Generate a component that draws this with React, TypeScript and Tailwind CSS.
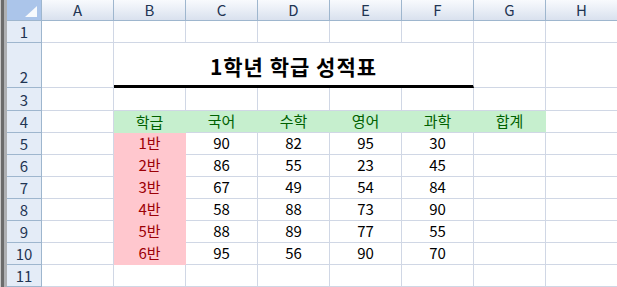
import React from 'react';

const columns = ['A', 'B', 'C', 'D', 'E', 'F', 'G', 'H'];
const subjects = ['국어', '수학', '영어', '과학'];

const scores = [
  { name: '1반', values: [90, 82, 95, 30] },
  { name: '2반', values: [86, 55, 23, 45] },
  { name: '3반', values: [67, 49, 54, 84] },
  { name: '4반', values: [58, 88, 73, 90] },
  { name: '5반', values: [88, 89, 77, 55] },
  { name: '6반', values: [95, 56, 90, 70] },
];

const cellBase = 'flex items-end justify-center leading-[18px] text-[15px]';
const grid = 'border-r border-b border-[#d0d7e5]';

const RowHeader: React.FC<{ n: number }> = ({ n }) => (
  <div className="flex items-end justify-center border-r border-b border-[#9eb6ce] bg-[#e4ecf7] text-[15px] leading-[18px] pb-[1px] text-[#1f3553]">
    {n}
  </div>
);

const Cell: React.FC<{ className?: string; children?: React.ReactNode }> = ({
  className = '',
  children,
}) => <div className={`${cellBase} ${className}`}>{children}</div>;

export default function App() {
  return (
    <div className="w-[617px] h-[287px] overflow-hidden bg-white font-['Noto_Sans_CJK_KR','Liberation_Sans',sans-serif] text-black">
      <div className="grid grid-cols-[7px_35px_repeat(8,72px)] grid-rows-[21px_22px_45px_23px_22px_repeat(7,22px)]">
        {/* Left window edge */}
        <div className="row-span-12 flex">
          <div className="w-px bg-[#c8c8c8]" />
          <div className="w-[3px] bg-[#6b6b6b]" />
          <div className="w-[3px] bg-[#aeb0b3]" />
        </div>

        {/* Corner */}
        <div className="flex items-end justify-end border-r border-b border-[#9eb6ce] bg-[#abc5ea] pr-[4px] pb-[3px]">
          <svg width="12" height="11" viewBox="0 0 12 11">
            <polygon points="12,0 12,11 0,11" fill="#ffffff" opacity="0.9" />
          </svg>
        </div>

        {/* Column headers */}
        {columns.map((c) => (
          <div
            key={c}
            className="flex items-center justify-center border-r border-b border-[#9eb6ce] bg-linear-to-b from-[#f8fafd] via-[#e9eef6] to-[#d9e1ee] text-[15px] text-[#1f3553]"
          >
            {c}
          </div>
        ))}

        {/* Row 1 */}
        <RowHeader n={1} />
        {columns.map((c) => (
          <div key={c} className={grid} />
        ))}

        {/* Row 2: title */}
        <RowHeader n={2} />
        <div className={grid} />
        <div className="col-span-5 flex items-end justify-center border-r border-[#d0d7e5] border-b-[3px] border-b-black pb-[7px]">
          <span className="text-[21px] font-bold leading-[24px] tracking-[1px]">1학년 학급 성적표</span>
        </div>
        <div className={grid} />
        <div className={grid} />

        {/* Row 3 */}
        <RowHeader n={3} />
        {columns.map((c) => (
          <div key={c} className={grid} />
        ))}

        {/* Row 4: headers */}
        <RowHeader n={4} />
        <div className={grid} />
        <Cell className="bg-[#c6efce] border-r border-[#c6efce] text-[#006100] pb-[2px]">학급</Cell>
        {subjects.map((s) => (
          <Cell
            key={s}
            className="bg-[#c6efce] border-r border-b border-r-[#c6efce] border-b-[#d0d7e5] text-[#006100] pb-[2px]"
          >
            {s}
          </Cell>
        ))}
        <Cell className="bg-[#c6efce] border-r border-b border-r-[#c6efce] border-b-[#d0d7e5] text-[#006100] pb-[2px]">
          합계
        </Cell>
        <div className={grid} />

        {/* Rows 5-10: data */}
        {scores.map((row, i) => (
          <React.Fragment key={row.name}>
            <RowHeader n={i + 5} />
            <div className={grid} />
            <Cell className="bg-[#ffc7ce] border-r border-b border-[#ffc7ce] text-[#9c0006] pb-[2px]">
              {row.name}
            </Cell>
            {row.values.map((v, j) => (
              <Cell key={j} className={`${grid} pb-[2px]`}>
                {v}
              </Cell>
            ))}
            <div className={grid} />
            <div className={grid} />
          </React.Fragment>
        ))}

        {/* Row 11 */}
        <RowHeader n={11} />
        {columns.map((c) => (
          <div key={c} className={grid} />
        ))}
      </div>
    </div>
  );
}
